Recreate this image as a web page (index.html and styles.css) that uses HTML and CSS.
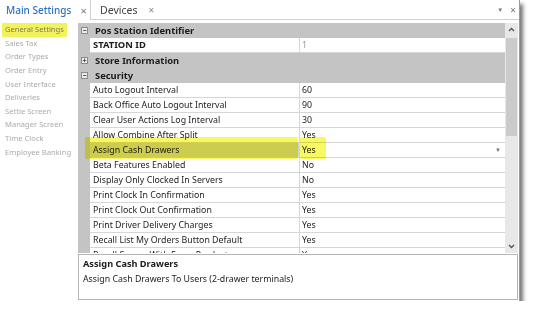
FILE: index.html
```html
<!DOCTYPE html>
<html lang="en">
<head>
  <meta charset="UTF-8">
  <title>Main Settings</title>
  <link rel="stylesheet" href="styles.css">
</head>
<body>
  <div class="shot">

    <!-- Pane title + document tabs -->
    <div class="topbar">
      <div class="pane-title">
        <span class="title">Main Settings</span>
        <span class="close">&times;</span>
      </div>
      <div class="tabs">
        <div class="tab">
          <span>Devices</span>
          <span class="close">&times;</span>
        </div>
        <div class="tab-tools">
          <span class="drop">&#9660;</span>
          <span class="close">&times;</span>
        </div>
      </div>
    </div>

    <div class="body">
      <!-- Settings navigation -->
      <ul class="nav">
        <li class="active"><span>General Settings</span></li>
        <li><span>Sales Tax</span></li>
        <li><span>Order Types</span></li>
        <li><span>Order Entry</span></li>
        <li><span>User Interface</span></li>
        <li><span>Deliveries</span></li>
        <li><span>Settle Screen</span></li>
        <li><span>Manager Screen</span></li>
        <li><span>Time Clock</span></li>
        <li><span>Employee Banking</span></li>
      </ul>

      <div class="main">
        <div class="grid-wrap">
          <div class="grid">
            <div class="group"><span class="exp">&minus;</span><span class="gname">Pos Station Identifier</span></div>
            <div class="row">
              <span class="margin"></span>
              <span class="name bold">STATION ID</span>
              <span class="value readonly">1</span>
            </div>
            <div class="group"><span class="exp">+</span><span class="gname">Store Information</span></div>
            <div class="group"><span class="exp">&minus;</span><span class="gname">Security</span></div>
            <div id="securityRows"></div>

            <!-- marker highlights -->
            <div class="marker marker-name"></div>
            <div class="marker marker-value"></div>
          </div>

          <div class="scrollbar">
            <svg class="arrow" width="13" height="14" viewBox="0 0 13 14"><polyline points="4,8 6.5,5.5 9,8" fill="none" stroke="#555" stroke-width="1.4"/></svg>
            <div class="track"><div class="thumb"></div></div>
            <svg class="arrow" width="13" height="14" viewBox="0 0 13 14"><polyline points="4,6 6.5,8.5 9,6" fill="none" stroke="#555" stroke-width="1.4"/></svg>
          </div>
        </div>

        <div class="desc">
          <div class="desc-title">Assign Cash Drawers</div>
          <div class="desc-text">Assign Cash Drawers To Users (2-drawer terminals)</div>
        </div>
      </div>
    </div>
  </div>

  <script>
    const settings = [
      ["Auto Logout Interval", "60"],
      ["Back Office Auto Logout Interval", "90"],
      ["Clear User Actions Log Interval", "30"],
      ["Allow Combine After Split", "Yes"],
      ["Assign Cash Drawers", "Yes", true],
      ["Beta Features Enabled", "No"],
      ["Display Only Clocked In Servers", "No"],
      ["Print Clock In Confirmation", "Yes"],
      ["Print Clock Out Confirmation", "Yes"],
      ["Print Driver Delivery Charges", "Yes"],
      ["Recall List My Orders Button Default", "Yes"],
      ["Recall Screen With Every Product", "Yes"]
    ];

    const list = document.getElementById("securityRows");
    settings.forEach(s => {
      const row = document.createElement("div");
      row.className = s[2] ? "row selected" : "row";
      row.innerHTML = `
        <span class="margin"></span>
        <span class="name">${s[0]}</span>
        <span class="value">${s[1]}${s[2] ? '<span class="caret">&#9660;</span>' : ''}</span>
      `;
      list.appendChild(row);
    });
  </script>
</body>
</html>
```

FILE: styles.css
```css
/* General Styling */
body {
  margin: 0;
  background-color: #fff;
  font-family: "Noto Sans", "Open Sans", sans-serif;
  color: #1c1c1c;
}

.shot {
  width: 519px;
  height: 301px;
  border-right: 1px solid #9a9a9a;
  background-color: #fff;
  box-shadow: 3px 4px 4px rgba(0, 0, 0, 0.55);
  display: flex;
  flex-direction: column;
  overflow: hidden;
}

/* Top bar */
.topbar {
  height: 20px;
  display: flex;
  flex-shrink: 0;
}

.pane-title {
  width: 90px;
  flex-shrink: 0;
  display: flex;
  align-items: center;
  white-space: nowrap;
  border-right: 1px solid #d0d0d0;
}

.pane-title .title {
  margin-left: 6px;
  font-size: 10px;
  font-weight: 500;
  color: #2f72c0;
}

.pane-title .close {
  margin-left: 9px;
  font-size: 11px;
  color: #777;
}

.tabs {
  flex: 1;
  display: flex;
  justify-content: space-between;
  align-items: center;
  border-bottom: 1px solid #cfcfcf;
}

.tab {
  display: flex;
  align-items: center;
  padding-left: 9px;
  font-size: 10.5px;
  color: #444;
  white-space: nowrap;
}

.tab .close {
  margin-left: 11px;
  font-size: 10px;
  color: #888;
}

.tab-tools {
  display: flex;
  align-items: center;
  gap: 7px;
  padding-right: 3px;
  color: #777;
}

.tab-tools .drop {
  font-size: 6px;
}

.tab-tools .close {
  font-size: 10px;
}

.body {
  flex: 1;
  display: flex;
  padding-top: 3px;
  min-height: 0;
}

/* Navigation */
.nav {
  width: 78px;
  margin: 0;
  padding: 0;
  list-style: none;
  flex-shrink: 0;
}

.nav li {
  height: 13.65px;
  line-height: 13.65px;
  font-size: 7.6px;
  color: #ababab;
  white-space: nowrap;
}

.nav li span {
  display: inline-block;
  padding: 0 3px;
  margin-left: 2px;
}

.nav li.active span {
  background-color: #f2f25c;
  color: #7d7d55;
}

/* Main area */
.main {
  flex: 1;
  display: flex;
  flex-direction: column;
  min-width: 0;
}

.grid-wrap {
  height: 230px;
  display: flex;
  flex-shrink: 0;
}

.grid {
  position: relative;
  width: 427px;
  overflow: hidden;
  font-size: 8.8px;
}

.group {
  height: 15px;
  display: flex;
  align-items: center;
  background-color: #c4c4c4;
}

.exp {
  width: 7px;
  height: 7px;
  margin: 0 5px 0 3px;
  box-sizing: border-box;
  border: 1px solid #8c8c8c;
  background-color: #ececec;
  color: #333;
  font-size: 7px;
  line-height: 5px;
  text-align: center;
  font-weight: bold;
}

.gname {
  font-weight: bold;
  font-size: 9.4px;
  padding-left: 2px;
}

.row {
  height: 15px;
  display: flex;
}

.row .margin {
  width: 12px;
  background-color: #c4c4c4;
}

.row .name,
.row .value {
  box-sizing: border-box;
  height: 15px;
  line-height: 14px;
  border-bottom: 1px solid #d6d6d6;
  white-space: nowrap;
  overflow: hidden;
}

.row .name {
  width: 210px;
  padding-left: 3px;
  border-right: 1px solid #d6d6d6;
}

.row .name.bold {
  font-weight: bold;
  font-size: 9.4px;
}

.row .value {
  flex: 1;
  padding-left: 2px;
  position: relative;
}

.row .value.readonly {
  color: #9a9a9a;
}

.row.selected .name {
  background-color: #d2d2d2;
}

.caret {
  position: absolute;
  right: 4px;
  top: 0;
  font-size: 6px;
  color: #777;
}

/* highlighter strokes */
.marker {
  position: absolute;
  top: 114px;
  height: 22px;
  background-color: #f8f860;
  mix-blend-mode: multiply;
  border-radius: 2px;
}

.marker-name {
  left: 7px;
  width: 213px;
}

.marker-value {
  left: 222px;
  width: 26px;
}

/* Scrollbar */
.scrollbar {
  width: 13px;
  background-color: #e8e8e8;
  display: flex;
  flex-direction: column;
}

.scrollbar .arrow {
  display: block;
  flex-shrink: 0;
}

.track {
  flex: 1;
}

.thumb {
  height: 98px;
  margin: 1px 1px 0;
  background-color: #cbcbcb;
}

/* Description panel */
.desc {
  height: 46px;
  margin: 1px 1px 0 0;
  border: 1px solid #b5b5b5;
  box-sizing: border-box;
  padding: 2px 4px;
  font-size: 8.8px;
}

.desc-title {
  font-weight: bold;
  font-size: 9.2px;
  line-height: 14px;
}

.desc-text {
  line-height: 16px;
}
```
